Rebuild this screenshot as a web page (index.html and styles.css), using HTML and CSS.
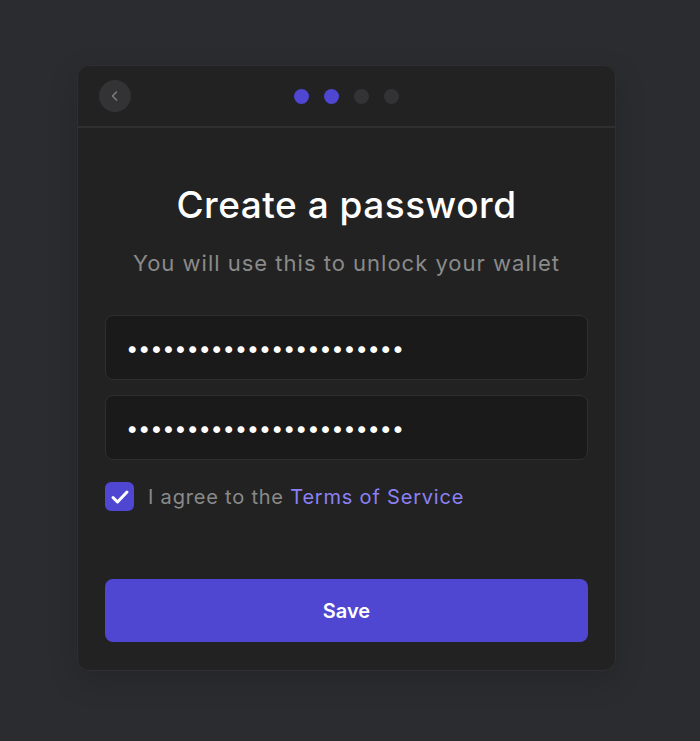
FILE: index.html
```html
<!DOCTYPE html>
<html lang="en">
<head>
    <meta charset="UTF-8">
    <meta name="viewport" content="width=device-width, initial-scale=1.0">
    <title>Create a password</title>
    <link rel="stylesheet" href="styles.css">
</head>
<body>
    <div class="onboarding-card">
        <div class="card-header">
            <button class="back-button" aria-label="Back">
                <svg width="12" height="12" viewBox="0 0 12 12" fill="none" stroke="currentColor" stroke-width="1.6" stroke-linecap="round" stroke-linejoin="round">
                    <polyline points="7.5 2 3.5 6 7.5 10"></polyline>
                </svg>
            </button>
            <div class="steps">
                <span class="step active"></span>
                <span class="step active"></span>
                <span class="step"></span>
                <span class="step"></span>
            </div>
        </div>
        <div class="card-body">
            <h1>Create a password</h1>
            <p class="subtitle">You will use this to unlock your wallet</p>
            <div class="fields">
                <input type="password" class="password-input" value="abcdefghijklmnopqrstuvw">
                <input type="password" class="password-input" value="abcdefghijklmnopqrstuvw">
            </div>
            <label class="terms">
                <span class="checkbox">
                    <svg width="20" height="20" viewBox="0 0 20 20" fill="none" stroke="white" stroke-width="3" stroke-linecap="round" stroke-linejoin="round">
                        <polyline points="3 10.5 7.5 15 17 5"></polyline>
                    </svg>
                </span>
                <span>I agree to the <a href="#" class="terms-link">Terms of Service</a></span>
            </label>
            <button class="save-button">Save</button>
        </div>
    </div>
</body>
</html>
```

FILE: styles.css
```css
:root {
    --page-bg: #2b2c30;
    --card-bg: #222222;
    --line: #2f2f31;
    --field-bg: #1a1a1a;
    --primary: #4f46d2;
    --link: #8b80f5;
    --muted: #8a8a8a;
}
* {
    margin: 0;
    padding: 0;
    box-sizing: border-box;
}
body {
    font-family: 'Inter', sans-serif;
    background-color: var(--page-bg);
    min-height: 100vh;
    padding: 65px 0 0 77px;
}
.onboarding-card {
    width: 539px;
    background-color: var(--card-bg);
    border: 1px solid var(--line);
    border-radius: 12px;
    box-shadow: 0 10px 30px rgba(0, 0, 0, 0.15);
    overflow: hidden;
}
.card-header {
    height: 62px;
    border-bottom: 2px solid var(--line);
    display: flex;
    align-items: center;
    justify-content: center;
    position: relative;
}
.back-button {
    position: absolute;
    left: 21px;
    top: 14px;
    width: 32px;
    height: 32px;
    border-radius: 50%;
    border: none;
    background-color: #333335;
    color: #7d7d7d;
    display: flex;
    align-items: center;
    justify-content: center;
    cursor: pointer;
}
.steps {
    display: flex;
    gap: 15px;
}
.step {
    width: 15px;
    height: 15px;
    border-radius: 50%;
    background-color: #333335;
}
.step.active {
    background-color: var(--primary);
}
.card-body {
    padding: 54px 27px 28px;
    display: flex;
    flex-direction: column;
}
h1 {
    font-size: 37px;
    line-height: 46px;
    font-weight: 500;
    letter-spacing: 0.5px;
    color: #ffffff;
    text-align: center;
}
.subtitle {
    margin-top: 21px;
    font-size: 22px;
    line-height: 28px;
    letter-spacing: 1px;
    color: var(--muted);
    text-align: center;
}
.fields {
    margin-top: 38px;
    display: flex;
    flex-direction: column;
    gap: 15px;
}
.password-input {
    height: 65px;
    width: 100%;
    background-color: var(--field-bg);
    border: 1px solid var(--line);
    border-radius: 8px;
    padding: 0 20px;
    font-family: 'Inter', sans-serif;
    font-size: 22px;
    letter-spacing: -0.3px;
    color: #ffffff;
    outline: none;
}
.terms {
    margin-top: 22px;
    display: flex;
    align-items: center;
    gap: 14px;
    font-size: 20px;
    letter-spacing: 0.8px;
    color: var(--muted);
    cursor: pointer;
}
.checkbox {
    width: 29px;
    height: 29px;
    border-radius: 6px;
    background-color: var(--primary);
    display: flex;
    align-items: center;
    justify-content: center;
}
.terms-link {
    color: var(--link);
    text-decoration: none;
}
.save-button {
    margin-top: 68px;
    height: 63px;
    border: none;
    border-radius: 8px;
    background-color: var(--primary);
    color: #ffffff;
    font-family: 'Inter', sans-serif;
    font-size: 20px;
    font-weight: 600;
    cursor: pointer;
}
```
